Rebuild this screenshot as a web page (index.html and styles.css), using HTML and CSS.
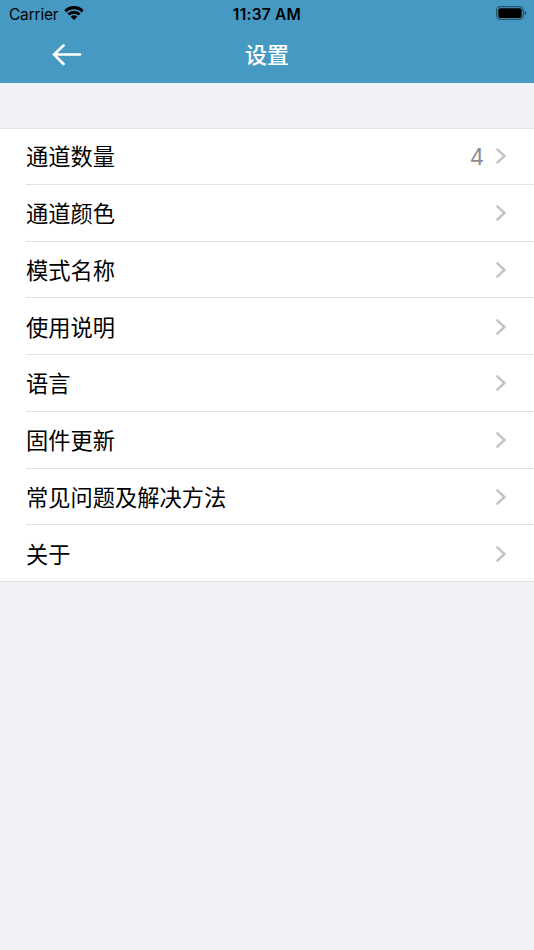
FILE: index.html
```html
<!DOCTYPE html>
<html lang="zh-CN">
<head>
<meta charset="utf-8">
<title>设置</title>
<link rel="stylesheet" href="styles.css">
</head>
<body>
<header class="header">
  <div class="status">
    <div class="carrier"><span>Carrier</span>
      <svg class="wifi" width="20" height="14" viewBox="0 0 20 14"><path d="M.3 4.1a13.8 13.8 0 0 1 19.4 0L17.6 6.4a10.8 10.8 0 0 0-15.2 0z"/><path d="M3.4 7.4a9.4 9.4 0 0 1 13.2 0l-2.1 2.2a6.4 6.4 0 0 0-9 0z"/><path d="M6.7 10.7a4.7 4.7 0 0 1 6.6 0L10 14z"/></svg>
    </div>
    <div class="time">11:37 AM</div>
    <svg class="battery" width="31" height="14" viewBox="0 0 31 14"><rect class="shell" x=".7" y=".7" width="26.6" height="12.8" rx="3.8"/><rect x="2.3" y="2.3" width="23.4" height="9.6" rx="2"/><path class="cap" d="M28.7 4.9q1.8.8 1.8 2.2t-1.8 2.2z"/></svg>
  </div>
  <div class="nav">
    <svg class="back" width="30" height="22" viewBox="0 0 30 22"><path d="M11.5 1.5L2 10.5l9.5 9.5M2 10.5h26"/></svg>
    <h1 class="title">设置</h1>
  </div>
</header>
<main class="list">
  <div class="row"><span class="label">通道数量</span><span class="value">4</span><svg class="chevron" viewBox="0 0 12 18"><path d="M2.4 2.4L9.4 9l-7 6.6"/></svg></div>
  <div class="row"><span class="label">通道颜色</span><svg class="chevron" viewBox="0 0 12 18"><path d="M2.4 2.4L9.4 9l-7 6.6"/></svg></div>
  <div class="row"><span class="label">模式名称</span><svg class="chevron" viewBox="0 0 12 18"><path d="M2.4 2.4L9.4 9l-7 6.6"/></svg></div>
  <div class="row"><span class="label">使用说明</span><svg class="chevron" viewBox="0 0 12 18"><path d="M2.4 2.4L9.4 9l-7 6.6"/></svg></div>
  <div class="row"><span class="label">语言</span><svg class="chevron" viewBox="0 0 12 18"><path d="M2.4 2.4L9.4 9l-7 6.6"/></svg></div>
  <div class="row"><span class="label">固件更新</span><svg class="chevron" viewBox="0 0 12 18"><path d="M2.4 2.4L9.4 9l-7 6.6"/></svg></div>
  <div class="row"><span class="label">常见问题及解决方法</span><svg class="chevron" viewBox="0 0 12 18"><path d="M2.4 2.4L9.4 9l-7 6.6"/></svg></div>
  <div class="row"><span class="label">关于</span><svg class="chevron" viewBox="0 0 12 18"><path d="M2.4 2.4L9.4 9l-7 6.6"/></svg></div>
</main>
</body>
</html>
```
FILE: styles.css
```css
* { box-sizing: border-box; }
body {
  margin: 0;
  min-height: 950px;
  background: #f2f1f6;
  color: #000;
  font-family: Inter, "Noto Sans CJK SC", sans-serif;
}
.header { height: 83px; background: #4699c3; }
.status {
  display: grid;
  grid-template-columns: 1fr auto 1fr;
  align-items: center;
  height: 27px;
  padding: 0 7px 0 9px;
}
.carrier { display: flex; align-items: center; gap: 6px; font-size: 15.5px; letter-spacing: -.2px; }
.carrier span { padding-top: 1px; }
.wifi { margin-bottom: 1px; }
.time { padding: 1px 2px 0 0; font-size: 15.5px; font-weight: 600; letter-spacing: .25px; }
.battery { justify-self: end; margin-bottom: 1px; }
.shell { fill: none; stroke: #000; stroke-opacity: .45; stroke-width: 1.3; }
.cap { fill-opacity: .5; }
.nav {
  display: grid;
  grid-template-columns: 1fr auto 1fr;
  align-items: center;
  height: 56px;
}
.back { margin-left: 52px; fill: none; stroke: #fff; stroke-width: 2.6; stroke-linecap: round; }
.title { margin: 0; color: #fff; font-size: 22px; font-weight: 500; line-height: 56px; }
.list {
  margin-top: 45px;
  padding-left: 26px;
  background: #fff;
  border-bottom: 1px solid #dfdee2;
  box-shadow: inset 0 1px #e2e1e5;
}
.row {
  display: flex;
  align-items: center;
  height: 56.75px;
  padding: 2px 27px 0 0;
  border-bottom: 1px solid #e2e2e4;
  font-size: 22.25px;
}
.row:last-child { height: 56px; border-bottom: 0; }
.label { flex: 1; padding-bottom: 3px; }
.value { margin-right: 11px; color: #8b8b90; }
.chevron { width: 12px; height: 18px; margin-bottom: 1px; fill: none; stroke: #c4c4c7; stroke-width: 2.5; stroke-linecap: round; }
```
